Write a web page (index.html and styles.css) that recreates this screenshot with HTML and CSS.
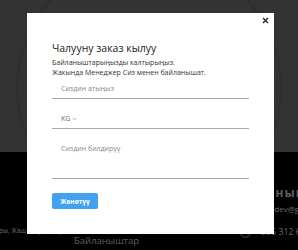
FILE: index.html
```html
<!DOCTYPE html>
<html>
<head>
    <title>Чалууну заказ кылуу</title>
    <link rel="stylesheet" href="styles.css">
</head>
<body>
    <div class="hero">
        <div class="hero-ring"></div>
    </div>
    <div class="footer">
        <div class="footer-col footer-about">Бишкек шаары, Жаш Гвардия бульвары</div>
        <div class="footer-col footer-links">Байланыштар</div>
        <div class="footer-col footer-contacts">
            <div class="footer-title">Байланыштар</div>
            <div class="footer-row footer-mail">
                <svg width="11" height="9" viewBox="0 0 11 9">
                    <rect x="0.5" y="0.5" width="10" height="8" fill="none" stroke="#555"/>
                    <path d="M0.5 0.5 L5.5 5 L10.5 0.5" fill="none" stroke="#555"/>
                </svg>
                <span>kadradev@gmail.com</span>
            </div>
            <div class="footer-row footer-phone">
                <svg width="11" height="11" viewBox="0 0 12 12">
                    <circle cx="6" cy="6" r="5" fill="none" stroke="#555" stroke-width="2"/>
                    <path d="M4 3.5 L5 5 L4.6 5.6 Q5.3 7 6.6 7.6 L7.2 7.2 L8.6 8.2" fill="none" stroke="#555" stroke-width="1.2"/>
                </svg>
                <span>+996 312 67 00 00</span>
            </div>
        </div>
    </div>

    <div class="backdrop"></div>
    <div class="modal">
        <button class="modal-close" aria-label="close">
            <svg width="7" height="7" viewBox="0 0 7 7">
                <path d="M1 1 L6 6 M6 1 L1 6" stroke="#333" stroke-width="1.6"/>
            </svg>
        </button>
        <h2 class="modal-title">Чалууну заказ кылуу</h2>
        <p class="modal-text">Байланыштарыңызды калтырыңыз.<br>Жакында Менеджер Сиз менен байланышат.</p>
        <form class="order-form">
            <input class="field" type="text" placeholder="Сиздин атыңыз">
            <div class="field field-phone">
                <span>KG</span>
                <svg class="caret" width="5" height="4" viewBox="0 0 5 4">
                    <path d="M0.7 1 L2.5 2.8 L4.3 1" fill="none" stroke="#999" stroke-width="0.8"/>
                </svg>
            </div>
            <textarea class="field field-message" placeholder="Сиздин билдирүү"></textarea>
            <button class="send-btn" type="button">Жөнөтүү</button>
        </form>
    </div>
</body>
</html>
```

FILE: styles.css
```css
body {
    margin: 0;
    width: 298px;
    height: 250px;
    overflow: hidden;
    font-family: "Open Sans", Arial, sans-serif;
    background-color: #000;
}

.hero {
    height: 152px;
    background-color: #666;
    position: relative;
    overflow: hidden;
}

.hero-ring {
    position: absolute;
    left: 16px;
    top: -45px;
    width: 266px;
    height: 266px;
    border-radius: 50%;
    border: 2px solid #5c5c5c;
    box-sizing: border-box;
}

.footer {
    height: 98px;
    background-color: #000;
    display: flex;
    color: #ccc;
}

.footer-col {
    flex: none;
    white-space: nowrap;
}

.footer-about {
    width: 114px;
    margin-left: -40px;
    padding-top: 74px;
    font-size: 6.5px;
    overflow: hidden;
}

.footer-links {
    width: 166px;
    padding-top: 82px;
    font-size: 9.5px;
    color: #bbb;
}

.footer-contacts {
    padding-top: 34px;
}

.footer-title {
    font-size: 12px;
    font-weight: bold;
    letter-spacing: 1px;
    line-height: 14px;
    margin-left: -8px;
    color: #bbb;
}

.footer-row {
    display: flex;
    align-items: center;
    gap: 5px;
    font-size: 8px;
}

.footer-mail {
    margin-top: 3px;
    margin-left: -3px;
}

.footer-phone {
    margin-top: 12px;
    font-size: 8.8px;
}

.backdrop {
    position: fixed;
    inset: 0;
    background-color: rgba(0, 0, 0, 0.5);
}

.modal {
    position: fixed;
    top: 13px;
    left: 27px;
    width: 247px;
    height: 221px;
    box-sizing: border-box;
    padding: 28px 25px 0;
    background-color: #fff;
}

.modal-close {
    position: absolute;
    top: 2px;
    right: 3px;
    border: 0;
    padding: 2px;
    background: none;
    line-height: 0;
    cursor: pointer;
}

.modal-title {
    margin: 0;
    font-size: 10.5px;
    font-weight: 500;
    line-height: 14px;
    color: #222;
}

.modal-text {
    margin: 3px 0 0;
    font-size: 7px;
    line-height: 9.5px;
    color: #333;
}

.order-form {
    display: flex;
    flex-direction: column;
    align-items: flex-start;
    margin-top: 2px;
}

.field {
    box-sizing: border-box;
    width: 100%;
    height: 20px;
    margin: 0 0 10px;
    padding: 0 9px;
    border: 0;
    border-bottom: 1px solid #aaa;
    font-family: inherit;
    font-size: 7px;
    color: #555;
    outline: none;
    background: none;
}

.field::placeholder {
    color: #888;
}

.field-phone {
    display: flex;
    align-items: center;
    gap: 2px;
    font-size: 7px;
    color: #666;
}

.field-message {
    height: 40px;
    padding-top: 5px;
    resize: none;
    margin-bottom: 14px;
}

.send-btn {
    width: 46px;
    height: 16px;
    border: 0;
    border-radius: 2px;
    background-color: #42a0f0;
    color: #fff;
    font-family: inherit;
    font-size: 6.5px;
    font-weight: bold;
    cursor: pointer;
}
```
